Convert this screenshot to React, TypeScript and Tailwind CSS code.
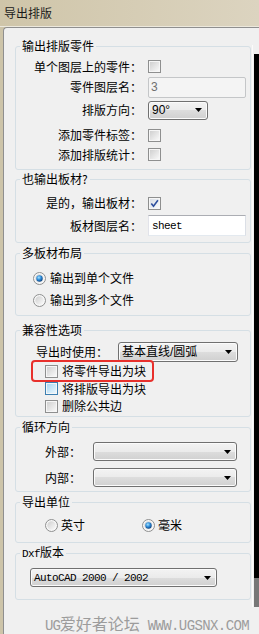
import type { ReactNode } from "react";

const Check = ({ checked, hover }: { checked?: boolean; hover?: boolean }) => (
  <span
    className={`flex h-[13px] w-[13px] shrink-0 items-center justify-center border bg-[#f6f6f6] ${
      hover ? "border-[#3c7fb1]" : "border-[#8e8f8f]"
    }`}
  >
    <span
      className={`flex h-[9px] w-[9px] items-center justify-center ${
        hover
          ? "bg-[linear-gradient(135deg,#a9d8f4,#eaf6fd)]"
          : checked
            ? "bg-[linear-gradient(135deg,#d9dee6,#f7f9fb)]"
            : "bg-[linear-gradient(135deg,#d0d0d0,#f8f8f8)]"
      }`}
    >
      {checked && (
        <svg width="9" height="9" viewBox="0 0 9 9">
          <path d="M1.3 4.4 3.5 7.2 7.9 1.2" fill="none" stroke="#2d4f9e" strokeWidth="1.6" />
        </svg>
      )}
    </span>
  </span>
);

const Radio = ({ id, checked }: { id: string; checked?: boolean }) => (
  <svg width="13" height="13" viewBox="0 0 13 13" className="shrink-0">
    <defs>
      <linearGradient id={`${id}b`} x1="0" y1="0" x2="1" y2="1">
        <stop offset="0" stopColor="#cfcfcf" />
        <stop offset="1" stopColor="#fbfbfb" />
      </linearGradient>
      <radialGradient id={`${id}d`} cx="0.4" cy="0.35" r="0.7">
        <stop offset="0" stopColor="#a6e4ff" />
        <stop offset="0.5" stopColor="#2c8ad8" />
        <stop offset="1" stopColor="#0e3c74" />
      </radialGradient>
    </defs>
    <circle cx="6.5" cy="6.5" r="6" fill="#f7f7f7" stroke="#8e8f8f" />
    <circle cx="6.5" cy="6.5" r="4.2" fill={`url(#${id}b)`} />
    {checked && <circle cx="6.5" cy="6.5" r="3.2" fill={`url(#${id}d)`} />}
  </svg>
);

const Select = ({ value, className, mono }: { value?: string; className: string; mono?: boolean }) => (
  <div
    className={`flex items-center justify-between rounded-[3px] border border-[#707070] bg-[linear-gradient(#f3f3f3,#ebebeb_50%,#dddddd_50%,#d0d0d0)] pl-[3px] pr-[5px] shadow-[inset_0_0_0_1px_#fbfbfb] ${className}`}
  >
    <span
      className={
        mono
          ? "font-['Liberation_Mono',monospace] text-[11px] tracking-[-0.6px]"
          : "font-['Liberation_Sans','Noto_Sans_CJK_SC',sans-serif]"
      }
    >
      {value}
    </span>
    <svg width="7" height="4" viewBox="0 0 7 4" className="shrink-0">
      <path d="M0 0H7L3.5 4Z" fill="#000" />
    </svg>
  </div>
);

const Group = ({ title, className, children }: { title: ReactNode; className: string; children: ReactNode }) => (
  <fieldset className={`w-[236px] rounded-[3px] border border-[#d5dfe5] ${className}`}>
    <legend className="ml-[4px] px-[2px] text-[12px] leading-[14px]">{title}</legend>
    {children}
  </fieldset>
);

const Row = ({ label, h, children }: { label: string; h: string; children: ReactNode }) => (
  <div className={`flex items-center ${h}`}>
    <span className="w-[126px] text-right">{label}</span>
    <div className="ml-[6px] flex">{children}</div>
  </div>
);

export default function App() {
  return (
    <div className="flex h-[634px] w-[259px] flex-col overflow-hidden bg-[#cdc4a9] font-['Noto_Sans_CJK_SC',sans-serif] text-[12px] leading-[14px] text-black">
      <div className="flex h-[27px] shrink-0 items-start border-b border-[#ece8dc] bg-[linear-gradient(90deg,#cfc5a9,#dcd4c0)] pl-[4px] pt-[6px] text-[#1a1a1a]">
        导出排版
      </div>

      <div className="ml-[3px] flex flex-1 rounded-tl-[4px] border-l border-t border-[#8f8f8f] bg-[#f0f0f0]">
        <div className="w-[247px] shrink-0 pl-[11px] pt-[11px]">
          <Group title="输出排版零件" className="">
            <div className="pb-[8px] pt-[4px]">
              <Row label="单个图层上的零件：" h="h-[19px]">
                <Check />
              </Row>
              <Row label="零件图层名：" h="h-[22px]">
                <div className="flex h-[21px] w-[98px] items-center rounded-[2px] border border-[#c4c6c8] bg-[#f4f4f4] pl-[2px] font-['Liberation_Sans',sans-serif] text-[#707070]">
                  3
                </div>
              </Row>
              <Row label="排版方向：" h="h-[24px]">
                <Select value="90°" className="h-[19px] w-[60px]" />
              </Row>
              <Row label="添加零件标签：" h="h-[26px]">
                <Check />
              </Row>
              <Row label="添加排版统计：" h="h-[13px]">
                <Check />
              </Row>
            </div>
          </Group>

          <Group title="也输出板材?" className="mt-[2px]">
            <div className="pb-[4px] pt-[7px]">
              <Row label="是的，输出板材：" h="h-[20px]">
                <Check checked />
              </Row>
              <Row label="板材图层名：" h="h-[25px]">
                <div className="flex h-[21px] w-[98px] items-center border border-[#abadb3] border-b-[#e3e9ef] border-l-[#e2e3ea] border-r-[#dbdfe6] bg-white pl-[3px] font-['Liberation_Mono',monospace] text-[11px] tracking-[-0.6px]">
                  sheet
                </div>
              </Row>
            </div>
          </Group>

          <Group title="多板材布局" className="mt-[3px]">
            <div className="pb-[4px] pl-[17px] pt-[7px]">
              <div className="flex h-[22px] items-center gap-[4px]">
                <Radio id="ra" checked />
                <span>输出到单个文件</span>
              </div>
              <div className="flex h-[22px] items-center gap-[4px]">
                <Radio id="rb" />
                <span>输出到多个文件</span>
              </div>
            </div>
          </Group>

          <Group title="兼容性选项" className="mt-[7px]">
            <div className="pb-[1px] pt-[4px]">
              <div className="flex h-[21px] items-center pl-[20px]">
                <span className="w-[72px]">导出时使用：</span>
                <Select value="基本直线/圆弧" className="ml-[10px] h-[20px] w-[120px]" />
              </div>
              <div className="relative flex h-[18px] items-center gap-[4px] pl-[29px]">
                <Check />
                <span>将零件导出为块</span>
                <span className="absolute left-[15px] top-[-2px] h-[22px] w-[123px] rounded-[4px] border-2 border-[#e8302c]" />
              </div>
              <div className="flex h-[17px] items-center gap-[4px] pl-[29px]">
                <Check hover />
                <span>将排版导出为块</span>
              </div>
              <div className="flex h-[18px] items-center gap-[4px] pl-[29px]">
                <Check />
                <span>删除公共边</span>
              </div>
            </div>
          </Group>

          <Group title="循环方向" className="mt-[3px]">
            <div className="flex flex-col gap-[7px] pb-[4px] pl-[29px] pt-[8px]">
              <div className="flex h-[19px] items-center">
                <span className="w-[36px]">外部：</span>
                <Select className="ml-[12px] h-[19px] w-[144px]" />
              </div>
              <div className="flex h-[19px] items-center">
                <span className="w-[36px]">内部：</span>
                <Select className="ml-[12px] h-[19px] w-[144px]" />
              </div>
            </div>
          </Group>

          <Group title="导出单位" className="mt-[3px]">
            <div className="flex h-[33px] items-start pl-[29px] pt-[7px]">
              <div className="flex h-[18px] w-[97px] items-center gap-[3px]">
                <Radio id="rc" />
                <span>英寸</span>
              </div>
              <div className="flex h-[18px] items-center gap-[3px]">
                <Radio id="rd" checked />
                <span>毫米</span>
              </div>
            </div>
          </Group>

          <Group
            title={
              <>
                <span className="font-['Liberation_Mono',monospace] text-[11px] tracking-[-0.6px]">Dxf</span>
                版本
              </>
            }
            className="mt-[2px]"
          >
            <div className="pb-[12px] pl-[14px] pt-[7px]">
              <Select value="AutoCAD 2000 / 2002" mono className="h-[19px] w-[187px]" />
            </div>
          </Group>

          <div className="mt-[14px] whitespace-nowrap pl-[30px] text-[16px] leading-[18px] text-[#9c9c9c]">
            <span className="font-['Liberation_Mono',monospace] text-[14px] tracking-[-1px]">UG</span>
            <span>爱好者论坛</span>
            <span className="font-['Liberation_Mono',monospace] text-[14px] tracking-[-0.6px]"> WWW.UGSNX.COM</span>
          </div>
        </div>

        <div className="w-px shrink-0" />
        <div className="mt-[17px] h-[562px] w-px shrink-0 bg-[#fbfbfb]" />
        <div className="w-px shrink-0" />
        <div className="mt-[26px] flex w-[5px] shrink-0 flex-col">
          <div className="h-[524px] bg-black" />
          <div className="h-[29px] bg-[#777777]" />
        </div>
      </div>
    </div>
  );
}
